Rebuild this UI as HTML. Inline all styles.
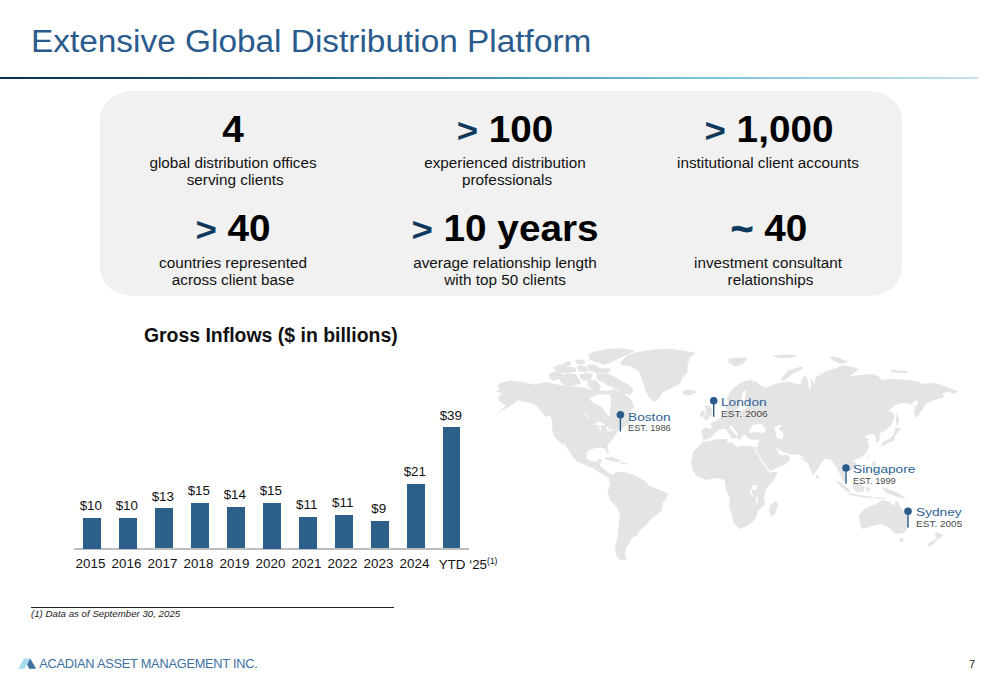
<!DOCTYPE html>
<html><head><meta charset="utf-8">
<style>
html,body{margin:0;padding:0;background:#fff;}
body{width:1000px;height:685px;position:relative;overflow:hidden;font-family:"Liberation Sans",sans-serif;}
.a{position:absolute;white-space:nowrap;line-height:1;}
.title{left:31px;top:26px;font-size:31px;color:#2a5b8c;transform:scaleX(1.077);transform-origin:0 0;}
.rule{left:0;top:76.5px;width:978px;height:2.2px;background:linear-gradient(90deg,#0b3049 0%,#1d5577 25%,#3f93b4 50%,#7cc3dc 72%,#c4e2ec 100%);}
.box{left:100px;top:91px;width:802px;height:205px;background:#f1f1f1;border-radius:33px / 28px;}
.num{font-weight:bold;font-size:36px;color:#000;text-align:center;width:300px;transform:scaleX(1.075);transform-origin:50% 0;}
.num b{color:#0f3a5e;font-size:34px;}
.desc{font-size:15.3px;line-height:16.8px;color:#111;text-align:center;width:300px;}
.ctitle{font-weight:bold;font-size:19.45px;color:#111;left:120.8px;width:300px;text-align:center;}
.bar{position:absolute;width:17.8px;background:#2d5f8b;}
.val{font-size:13.4px;color:#111;width:40px;text-align:center;}
.yr{font-size:13.4px;color:#111;width:40px;text-align:center;}
.axis{left:73.8px;top:548.3px;width:395.7px;height:1.5px;background:#bdbdbd;}
.fnl{left:31px;top:607px;width:363px;height:1.2px;background:#222;}
.fn{left:31px;top:609.4px;font-size:9.7px;font-style:italic;color:#222;}
.pg{left:969px;top:659px;font-size:11px;color:#222;}
.logo{left:39.2px;top:658.3px;font-size:12.8px;color:#3d719f;letter-spacing:-0.25px;}
.city{font-size:11.5px;color:#2e6294;transform:scaleX(1.19);transform-origin:0 0;}
.est{font-size:8.5px;color:#4a4a4a;transform:scaleX(1.09);transform-origin:0 0;}
</style></head>
<body>
<div class="a title">Extensive Global Distribution Platform</div>
<div class="a rule"></div>
<div class="a box"></div>

<div class="a num" style="left:83px;top:111.6px;">4</div>
<div class="a num" style="left:355px;top:111.6px;"><b>&gt;</b> 100</div>
<div class="a num" style="left:618.5px;top:111.6px;"><b>&gt;</b> 1,000</div>
<div class="a desc" style="left:83px;top:155.1px;">global distribution offices<br><span style="position:relative;left:2.2px">serving clients</span></div>
<div class="a desc" style="left:355px;top:155.1px;">experienced distribution<br><span style="position:relative;left:2.1px">professionals</span></div>
<div class="a desc" style="left:618px;top:155.1px;">institutional client accounts</div>

<div class="a num" style="left:83px;top:211.2px;"><b>&gt;</b> 40</div>
<div class="a num" style="left:355px;top:211.2px;"><b>&gt;</b> 10 years</div>
<div class="a num" style="left:619px;top:211.2px;"><b style="font-size:36px;-webkit-text-stroke:0.8px #0f3a5e;">~</b> 40</div>
<div class="a desc" style="left:83px;top:255.4px;">countries represented<br>across client base</div>
<div class="a desc" style="left:355px;top:255.4px;">average relationship length<br>with top 50 clients</div>
<div class="a desc" style="left:618px;top:255.4px;">investment consultant<br><span style="position:relative;left:2.5px">relationships</span></div>

<div class="a ctitle" style="top:326px;">Gross Inflows ($ in billions)</div>

<div class="a axis"></div>
<div class="bar" style="left:82.9px;top:518px;height:30.5px;"></div>
<div class="bar" style="left:118.9px;top:518px;height:30.5px;"></div>
<div class="bar" style="left:154.9px;top:508.4px;height:40.1px;"></div>
<div class="bar" style="left:190.9px;top:502.6px;height:45.9px;"></div>
<div class="bar" style="left:226.9px;top:506.6px;height:41.9px;"></div>
<div class="bar" style="left:262.9px;top:502.5px;height:46px;"></div>
<div class="bar" style="left:298.9px;top:517px;height:31.5px;"></div>
<div class="bar" style="left:334.9px;top:514.9px;height:33.6px;"></div>
<div class="bar" style="left:370.9px;top:520.9px;height:27.6px;"></div>
<div class="bar" style="left:406.9px;top:483.6px;height:64.9px;"></div>
<div class="bar" style="left:442.7px;top:427.3px;height:121.2px;"></div>

<div class="a val" style="left:70.8px;top:499.1px;">$10</div>
<div class="a val" style="left:106.8px;top:499.1px;">$10</div>
<div class="a val" style="left:142.8px;top:489.6px;">$13</div>
<div class="a val" style="left:178.8px;top:483.6px;">$15</div>
<div class="a val" style="left:214.8px;top:487.6px;">$14</div>
<div class="a val" style="left:250.8px;top:483.6px;">$15</div>
<div class="a val" style="left:286.8px;top:498.1px;">$11</div>
<div class="a val" style="left:322.8px;top:496.1px;">$11</div>
<div class="a val" style="left:358.8px;top:502.1px;">$9</div>
<div class="a val" style="left:394.8px;top:464.6px;">$21</div>
<div class="a val" style="left:430.8px;top:408.6px;">$39</div>

<div class="a yr" style="left:70.5px;top:557.0px;">2015</div>
<div class="a yr" style="left:106.5px;top:557.0px;">2016</div>
<div class="a yr" style="left:142.5px;top:557.0px;">2017</div>
<div class="a yr" style="left:178.5px;top:557.0px;">2018</div>
<div class="a yr" style="left:214.5px;top:557.0px;">2019</div>
<div class="a yr" style="left:250.5px;top:557.0px;">2020</div>
<div class="a yr" style="left:286.5px;top:557.0px;">2021</div>
<div class="a yr" style="left:322.5px;top:557.0px;">2022</div>
<div class="a yr" style="left:358.5px;top:557.0px;">2023</div>
<div class="a yr" style="left:394.5px;top:557.0px;">2024</div>
<div class="a" style="left:438.7px;top:557px;font-size:13.4px;color:#111;">YTD &#8216;25<span style="font-size:8.5px;vertical-align:5px;">(1)</span></div>

<svg class="a" style="left:0;top:0;" width="1000" height="685" viewBox="0 0 1000 685"><path d="M501.2,382.8 L510.0,380.4 L518.0,381.6 L526.0,382.8 L534.8,384.8 L542.0,382.8 L547.6,382.0 L552.4,383.6 L562.0,385.2 L566.0,385.0 L574.0,386.4 L584.0,387.6 L590.0,390.0 L598.0,390.4 L608.0,391.0 L614.0,389.0 L622.0,392.4 L630.0,398.4 L634.4,406.0 L631.0,410.4 L628.0,416.0 L630.0,423.0 L623.0,428.0 L618.6,430.6 L613.6,437.8 L609.4,442.8 L607.4,446.0 L608.0,450.0 L609.0,453.6 L606.8,453.2 L605.4,449.0 L601.2,447.4 L595.2,448.0 L589.0,450.0 L586.4,453.2 L587.0,459.2 L591.0,461.2 L597.2,461.2 L599.0,458.4 L602.0,460.0 L599.6,465.6 L605.0,470.0 L610.0,473.6 L615.0,477.0 L608.0,477.6 L600.0,473.0 L593.2,468.4 L586.0,465.4 L576.8,461.2 L570.6,455.2 L565.6,448.0 L560.4,442.8 L554.2,436.8 L552.2,430.6 L552.2,420.4 L549.6,415.6 L546.0,416.4 L542.0,412.4 L538.0,407.6 L533.2,403.6 L526.0,402.0 L520.4,400.8 L517.2,400.6 L514.0,403.6 L507.6,407.6 L499.6,411.8 L496.8,413.2 L500.4,410.4 L506.0,405.6 L500.4,402.0 L497.6,399.6 L498.8,396.4 L502.0,393.2 L495.6,391.6 L499.6,389.2 L497.2,385.6Z M620.0,362.5 L627.5,355.0 L637.5,351.9 L653.8,349.4 L670.0,348.8 L682.5,350.6 L696.2,353.1 L690.0,357.5 L687.5,365.0 L687.5,372.5 L682.5,377.5 L680.0,383.8 L670.0,388.8 L662.5,392.5 L658.8,398.8 L655.0,401.9 L650.0,398.8 L646.2,392.5 L643.8,385.0 L641.2,377.5 L638.8,371.2 L630.0,366.2 L621.2,365.0Z M682.5,391.2 L687.5,390.0 L695.0,390.6 L696.2,392.5 L691.2,395.0 L686.2,395.6 L683.1,393.8Z M705.0,405.0 L710.0,406.2 L712.5,410.0 L711.9,415.0 L708.8,418.1 L705.6,421.2 L703.8,417.5 L706.2,413.8Z M700.6,411.9 L704.4,410.0 L705.0,415.0 L701.9,417.5 L700.0,415.6Z M610.0,477.5 L615.0,472.5 L625.0,472.0 L635.0,475.0 L645.0,481.2 L650.0,486.2 L660.0,490.0 L668.0,493.8 L666.2,498.8 L662.5,502.5 L662.0,510.0 L656.2,515.0 L650.0,520.0 L645.0,526.2 L640.0,530.0 L637.5,535.0 L632.5,537.5 L630.0,542.5 L626.2,547.5 L625.0,555.0 L627.0,559.5 L620.0,560.0 L616.2,555.0 L615.0,547.5 L617.5,537.5 L618.8,525.0 L620.0,515.0 L617.5,507.5 L610.0,500.0 L607.5,491.2 L610.0,485.0 L608.8,478.8Z M603.8,457.5 L612.5,457.0 L622.5,461.2 L615.0,462.0 L607.5,460.0Z M621.2,462.0 L627.5,463.0 L626.2,464.5 L621.2,464.0Z M703.0,439.0 L701.6,430.4 L705.0,427.6 L712.4,429.0 L710.0,423.6 L717.0,420.4 L722.0,415.6 L727.0,413.0 L726.0,406.4 L729.0,402.4 L727.0,398.4 L730.0,392.0 L736.0,386.0 L742.0,382.0 L749.0,380.0 L756.0,381.6 L761.0,385.6 L766.0,388.0 L772.0,385.0 L780.0,382.4 L790.0,381.6 L790.0,382.0 L796.0,384.0 L801.0,385.0 L801.0,380.0 L805.0,375.5 L808.0,380.0 L809.0,389.0 L810.5,388.5 L811.0,378.0 L814.0,384.0 L816.0,377.0 L820.0,375.0 L826.0,371.0 L833.0,369.0 L844.0,365.0 L852.0,367.0 L859.0,369.0 L850.0,376.0 L860.0,375.0 L872.0,374.0 L878.0,376.0 L882.0,380.0 L890.0,379.0 L892.0,379.0 L907.0,380.0 L918.7,381.4 L920.5,383.6 L930.4,383.6 L934.0,382.7 L943.0,385.4 L952.0,389.0 L958.3,391.3 L954.7,394.0 L948.4,391.7 L942.1,393.5 L944.8,397.1 L935.8,399.8 L930.4,401.6 L930.0,402.0 L925.9,404.2 L923.1,408.5 L919.7,413.2 L915.7,418.0 L914.0,411.8 L915.5,406.6 L918.3,402.3 L916.4,399.9 L910.7,404.2 L903.1,402.8 L895.5,404.9 L888.0,411.3 L893.6,413.2 L894.6,418.0 L891.7,424.6 L886.1,430.3 L881.3,432.7 L880.4,433.1 L879.2,435.5 L879.5,440.4 L877.8,442.5 L875.7,441.4 L876.0,436.2 L873.6,433.7 L870.1,434.1 L864.5,436.3 L866.6,438.4 L869.7,439.8 L865.9,441.2 L869.4,443.9 L868.7,448.1 L866.6,452.3 L863.1,455.8 L858.9,458.6 L854.0,460.0 L849.8,461.4 L852.4,459.6 L856.6,463.8 L854.8,468.0 L850.0,471.6 L846.4,468.0 L844.0,469.2 L845.2,476.4 L846.4,482.4 L842.8,480.0 L838.0,470.4 L834.4,464.4 L830.8,459.6 L824.8,458.4 L821.2,463.2 L817.6,469.2 L812.8,475.2 L808.0,463.2 L799.6,457.2 L806.7,459.4 L799.4,454.5 L791.4,454.5 L785.8,452.9 L790.6,458.6 L786.6,463.4 L778.6,467.4 L769.7,471.0 L768.1,468.6 L763.3,461.8 L758.5,454.5 L755.3,448.1 L757.7,446.5 L759.0,439.0 L755.8,440.2 L751.0,439.4 L747.0,437.0 L744.2,434.2 L742.2,435.8 L740.6,439.0 L738.6,439.8 L736.6,436.2 L738.2,434.2 L731.6,425.6 L729.2,426.8 L735.0,434.4 L737.8,437.0 L735.0,438.4 L732.6,439.0 L729.4,434.2 L725.8,429.0 L723.4,428.6 L719.0,429.8 L714.2,433.4 L711.8,436.6 L707.8,439.0 L703.8,439.8Z M703.0,440.6 L707.0,441.4 L713.4,439.8 L721.4,439.0 L727.0,439.0 L727.4,442.2 L731.8,442.6 L737.4,447.0 L743.0,445.4 L751.0,446.6 L755.8,447.0 L756.2,448.6 L754.5,448.9 L761.7,461.8 L766.9,469.0 L768.9,472.2 L778.0,472.0 L774.0,480.0 L766.4,488.0 L764.0,498.0 L765.0,504.0 L758.4,510.0 L756.0,518.0 L750.0,524.0 L740.0,529.0 L734.0,524.0 L731.6,514.0 L729.0,506.0 L730.0,498.0 L726.0,490.0 L724.4,480.0 L716.0,478.0 L706.0,480.0 L696.0,476.0 L692.0,468.0 L691.0,460.0 L692.0,458.0 L693.0,452.0 L697.0,448.0 L701.0,444.0Z M776.0,501.0 L778.0,505.0 L775.0,514.0 L771.0,517.0 L769.0,511.0 L770.0,505.0Z M815.8,474.6 L818.8,475.8 L818.6,478.8 L816.4,478.8Z M780.4,379.6 L788.8,370.0 L802.0,366.4 L803.5,368.5 L791.2,374.8 L784.0,381.1Z M830.0,356.0 L840.0,358.0 L848.0,362.0 L840.0,364.0 L832.0,360.0Z M890.0,370.0 L908.0,371.0 L906.0,373.0 L892.0,372.4Z M860.0,513.0 L866.0,508.0 L876.0,504.0 L882.0,500.0 L890.0,502.0 L894.0,506.0 L896.0,500.0 L900.0,506.0 L904.0,512.0 L908.0,518.0 L909.0,526.0 L904.0,533.0 L896.0,534.0 L890.0,528.0 L882.0,524.0 L872.0,526.0 L862.0,529.0 L860.0,524.0 L859.0,516.0Z M899.0,538.0 L904.0,538.4 L903.0,542.0 L900.0,542.0Z M936.0,532.0 L943.0,535.0 L940.0,538.0 L938.0,540.0 L935.0,536.0Z M938.0,538.0 L934.0,544.0 L929.0,547.0 L928.0,544.0 L934.0,540.0Z M835.4,479.9 L842.6,483.5 L850.3,490.5 L849.1,492.7 L842.6,488.0 L836.3,481.7Z M848.9,493.2 L857.0,494.5 L866.0,495.9 L873.2,496.8 L872.5,498.1 L864.2,497.6 L848.9,494.9Z M852.5,483.5 L859.7,484.2 L864.7,487.1 L863.5,491.8 L857.0,491.9 L853.2,488.5Z M866.0,487.1 L870.1,487.8 L868.9,491.8 L866.9,490.9Z M882.2,487.1 L888.5,488.9 L894.8,491.6 L902.0,495.2 L906.5,499.0 L900.2,498.1 L893.0,495.4 L885.8,492.7 L883.1,489.8Z M874.1,497.0 L880.4,497.5 L885.8,498.4 L884.9,499.3 L875.0,498.4Z M872.8,460.8 L875.2,461.4 L875.8,468.0 L878.2,471.6 L876.4,473.4 L874.0,469.2 L872.2,464.4Z M881.3,446.0 L882.0,442.5 L889.0,439.0 L893.2,435.5 L895.3,430.6 L898.1,429.2 L900.9,428.5 L898.1,432.0 L895.3,435.5 L893.9,441.1 L888.3,442.8 L883.4,445.6Z M895.5,427.4 L901.2,428.4 L897.4,431.7 L894.1,431.2Z M896.5,413.2 L897.9,416.1 L899.3,421.7 L897.4,426.5 L896.0,421.7 L896.3,416.1Z M868.0,455.1 L869.4,455.8 L869.0,458.2 L867.9,457.5Z M727.6,359.2 L736.0,357.4 L748.0,358.0 L743.2,364.0 L734.8,366.4 L728.8,362.8Z M772.0,355.6 L784.0,354.4 L798.4,355.0 L791.2,358.0 L778.0,358.0Z" fill="#e4e4e4"/><path d="M589.0,355.0 L596.0,352.0 L608.0,349.5 L622.0,349.0 L633.0,351.0 L627.0,354.0 L618.0,358.0 L610.0,362.0 L605.0,364.0 L598.0,362.0 L590.0,359.0Z M576.0,361.0 L582.0,360.0 L585.0,362.5 L582.0,364.0 L577.0,363.0Z M563.5,364.0 L567.0,362.0 L571.0,362.5 L570.0,365.0 L565.0,365.5Z M554.0,368.0 L560.0,365.0 L566.0,367.0 L574.0,368.0 L576.0,371.0 L570.0,372.0 L562.0,372.0 L555.0,369.0Z M578.0,366.0 L586.0,367.0 L587.0,371.0 L580.0,371.0 L578.0,368.0Z M588.0,365.0 L596.0,366.0 L600.0,369.0 L610.0,369.0 L609.0,372.0 L596.0,372.0 L589.0,370.0Z M550.0,374.0 L556.0,372.0 L562.0,373.0 L560.0,378.0 L554.0,380.0 L550.0,378.0Z M560.0,376.0 L568.0,374.0 L576.0,375.0 L578.0,379.0 L580.0,383.0 L573.0,385.0 L566.0,385.0 L561.0,382.0Z M580.0,375.0 L587.0,373.5 L592.0,375.0 L590.0,379.0 L584.0,380.0 L581.0,378.0Z M597.0,374.0 L605.0,374.0 L612.0,376.0 L620.0,381.0 L628.0,385.0 L633.0,390.0 L630.0,394.0 L624.0,393.0 L616.0,388.0 L608.0,385.0 L604.0,382.0 L598.0,379.0Z M589.0,380.0 L596.0,381.0 L600.0,387.0 L598.0,392.0 L592.0,389.0 L588.0,385.0Z" fill="#e4e4e4" stroke="#e4e4e4" stroke-width="1.4" stroke-linejoin="round"/><path d="M590.0,398.0 L598.0,394.4 L610.0,394.4 L611.2,400.0 L610.4,408.0 L609.6,416.4 L608.0,415.6 L605.6,412.0 L602.0,407.0 L594.0,403.6 L591.0,401.0Z M748.8,430.4 L752.9,424.8 L761.7,424.0 L766.5,430.4 L763.3,432.9 L756.1,432.0 L749.6,432.9Z M774.5,427.2 L779.4,424.4 L781.8,425.6 L778.6,428.8 L783.4,432.9 L782.6,438.5 L778.6,439.3 L776.1,436.1 L775.3,431.2Z M775.3,448.1 L777.8,448.9 L785.0,452.9 L788.2,453.7 L783.4,455.3 L780.2,455.3 L777.8,452.1Z M733.0,411.0 L739.0,408.0 L741.0,400.0 L743.0,392.0 L746.0,390.0 L745.0,398.0 L748.0,406.0 L744.0,410.0 L740.0,412.4 L735.0,413.0Z M594.1,424.0 L599.2,421.5 L605.4,424.5 L601.3,426.0 L597.2,425.0Z M599.2,426.6 L601.3,426.8 L600.8,431.7 L599.8,430.6Z M605.4,426.8 L608.4,427.6 L609.5,430.6 L606.4,429.6Z M606.4,431.2 L613.5,428.6 L613.0,429.8 L607.4,432.1Z M584.9,413.3 L586.0,413.1 L588.0,417.9 L587.2,418.4Z M563.0,443.6 L564.4,443.2 L572.4,456.4 L571.0,456.8Z M752.0,485.0 L757.0,485.6 L756.6,490.0 L752.4,489.6Z M750.0,490.0 L751.6,490.0 L753.2,496.4 L751.6,496.4Z M755.6,496.4 L757.2,496.4 L758.0,503.0 L756.4,503.0Z" fill="#fff"/></svg>
<svg class="a" style="left:0;top:0;" width="1000" height="685" viewBox="0 0 1000 685">
<g fill="#2a5d8c" stroke="none">
<circle cx="620.4" cy="414.7" r="3.8"/><rect x="619.7" y="415" width="1.4" height="16.5"/>
<circle cx="713.7" cy="400.8" r="3.8"/><rect x="713" y="401" width="1.4" height="15.8"/>
<circle cx="846" cy="468" r="3.8"/><rect x="845.3" y="468" width="1.4" height="15.8"/>
<circle cx="908" cy="511.2" r="3.8"/><rect x="907.3" y="511" width="1.4" height="16.6"/>
</g></svg>
<div class="a city" style="left:627.7px;top:411.8px;">Boston</div>
<div class="a est" style="left:627.7px;top:424.4px;">EST. 1986</div>
<div class="a city" style="left:720.5px;top:397.0px;">London</div>
<div class="a est" style="left:721px;top:409.6px;transform:scaleX(1.19);">EST. 2006</div>
<div class="a city" style="left:853.4px;top:463.5px;">Singapore</div>
<div class="a est" style="left:853.3px;top:476.6px;">EST. 1999</div>
<div class="a city" style="left:915.7px;top:507.2px;">Sydney</div>
<div class="a est" style="left:915.6px;top:520.0px;transform:scaleX(1.18);">EST. 2005</div>


<div class="a fnl"></div>
<div class="a fn">(1) Data as of September 30, 2025</div>

<svg class="a" style="left:0;top:640px;" width="60" height="40" viewBox="0 640 60 40">
  <polygon points="18.5,668.7 23.9,658.5 30.2,658.5 24.5,668.7" fill="#a6daee"/>
  <polygon points="30.2,658.5 36.2,668.7 29,668.7 27.2,664.5" fill="#3f74a1"/>
</svg>
<div class="a logo">ACADIAN ASSET MANAGEMENT INC.</div>
<div class="a pg">7</div>
</body></html>
